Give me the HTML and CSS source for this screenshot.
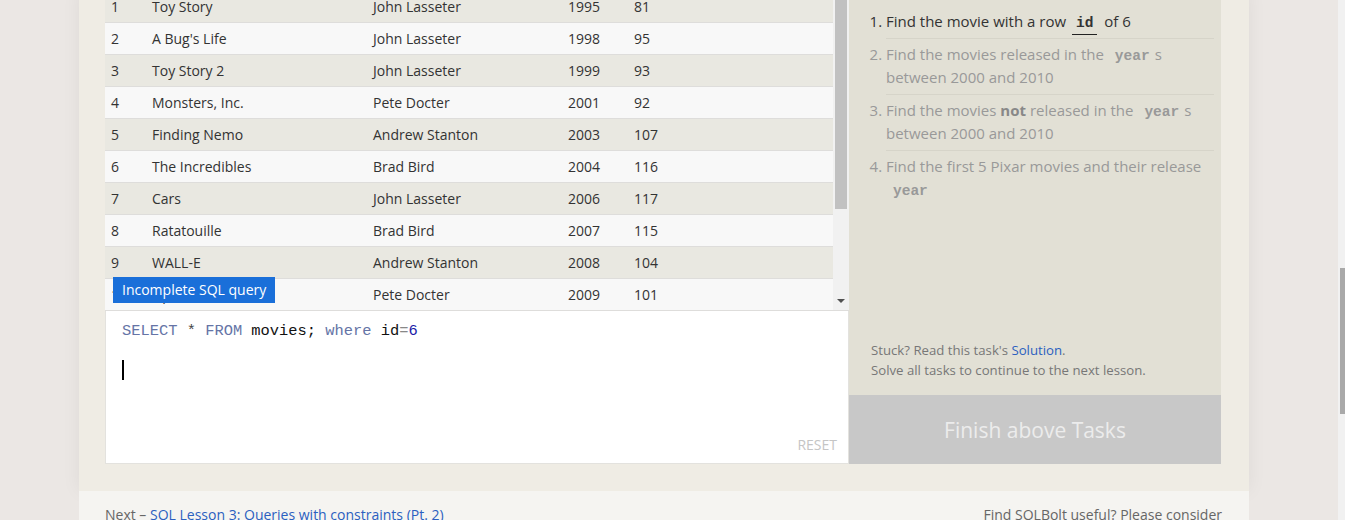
FILE: index.html
```html
<!DOCTYPE html>
<html>
<head>
<meta charset="utf-8">
<link rel="stylesheet" href="styles.css">
</head>
<body>
<div class="page">
  <div class="container">
    <div class="exercise">
      <div class="left">
        <div class="results">
          <div class="grid">
            <div class="row odd"><span>1</span><span>Toy Story</span><span>John Lasseter</span><span>1995</span><span>81</span></div>
            <div class="row"><span>2</span><span>A Bug's Life</span><span>John Lasseter</span><span>1998</span><span>95</span></div>
            <div class="row odd"><span>3</span><span>Toy Story 2</span><span>John Lasseter</span><span>1999</span><span>93</span></div>
            <div class="row"><span>4</span><span>Monsters, Inc.</span><span>Pete Docter</span><span>2001</span><span>92</span></div>
            <div class="row odd"><span>5</span><span>Finding Nemo</span><span>Andrew Stanton</span><span>2003</span><span>107</span></div>
            <div class="row"><span>6</span><span>The Incredibles</span><span>Brad Bird</span><span>2004</span><span>116</span></div>
            <div class="row odd"><span>7</span><span>Cars</span><span>John Lasseter</span><span>2006</span><span>117</span></div>
            <div class="row"><span>8</span><span>Ratatouille</span><span>Brad Bird</span><span>2007</span><span>115</span></div>
            <div class="row odd"><span>9</span><span>WALL-E</span><span>Andrew Stanton</span><span>2008</span><span>104</span></div>
            <div class="row"><span>10</span><span>Up</span><span>Pete Docter</span><span>2009</span><span>101</span></div>
          </div>
          <div class="vscroll">
            <div class="vthumb"></div>
            <div class="varrow"></div>
          </div>
          <div class="tooltip">Incomplete SQL query</div>
        </div>
        <div class="editor">
          <div class="code-line"><span class="kw">SELECT</span> <span class="op">*</span> <span class="kw">FROM</span> movies; <span class="kw">where</span> id<span class="eq">=</span><span class="num">6</span></div>
          <div class="code-line"></div>
          <div class="code-line"><span class="cursor"></span></div>
          <div class="reset">RESET</div>
        </div>
      </div>
      <div class="right">
        <ol class="tasks">
          <li class="active">Find the movie with a row <code class="tcode active-code">id</code> of 6</li>
          <li>Find the movies released in the <code class="tcode">year</code>s between 2000 and 2010</li>
          <li>Find the movies <b>not</b> released in the <code class="tcode">year</code>s between 2000 and 2010</li>
          <li>Find the first 5 Pixar movies and their release <code class="tcode">year</code></li>
        </ol>
        <div class="help">
          <div>Stuck? Read this task's <a class="link">Solution</a>.</div>
          <div>Solve all tasks to continue to the next lesson.</div>
        </div>
        <div class="finish">Finish above Tasks</div>
      </div>
    </div>
  </div>
  <div class="footer">
    <div class="next">Next – <a class="link">SQL Lesson 3: Queries with constraints (Pt. 2)</a></div>
    <div class="useful">Find SQLBolt useful? Please consider</div>
  </div>
</div>
<div class="page-scroll"><div class="page-thumb"></div></div>
</body>
</html>
```
FILE: styles.css
```css
html, body {
  margin: 0;
  padding: 0;
  height: 520px;
  overflow: hidden;
}
body {
  background: #ebe7e4;
  font-family: "Open Sans", "Liberation Sans", sans-serif;
  color: #333;
}
.page {
  width: 1170px;
  margin-left: 79px;
  margin-top: -9px;
}
.container {
  background: #efece4;
  padding: 0 28px 27px 26px;
  box-shadow: 0 0 18px rgba(0, 0, 0, 0.06);
}
.exercise {
  display: flex;
}
.left {
  width: 744px;
  display: flex;
  flex-direction: column;
}
.results {
  position: relative;
  display: flex;
  height: 320px;
}
.grid {
  width: 728px;
}
.row {
  display: grid;
  grid-template-columns: 41px 221px 195px 66px 1fr;
  height: 31px;
  align-items: center;
  border-bottom: 1px solid #dedddb;
  background: #f8f8f8;
  font-size: 14px;
  color: #333;
}
.row.odd {
  background: #e9e8e1;
}
.row span {
  padding-left: 6px;
  white-space: nowrap;
}
.vscroll {
  width: 16px;
  background: #f1f1f1;
  position: relative;
  border-bottom: 1px solid #dedddb;
}
.vthumb {
  margin: 0 2px;
  height: 218px;
  background: #c1c1c1;
}
.varrow {
  position: absolute;
  left: 4px;
  bottom: 7px;
  width: 0;
  height: 0;
  border-left: 4px solid transparent;
  border-right: 4px solid transparent;
  border-top: 4px solid #505050;
}
.tooltip {
  position: absolute;
  left: 8px;
  top: 286px;
  height: 26px;
  line-height: 26px;
  padding: 0 9px;
  background: #1a6fd9;
  color: #fff;
  font-size: 14px;
}
.editor {
  background: #fff;
  border: 1px solid #e3e2de;
  border-top: none;
  padding: 10px 0 0 16px;
  box-sizing: border-box;
  height: 153px;
  display: flex;
  flex-direction: column;
  font-family: "Liberation Mono", "DejaVu Sans Mono", monospace;
  font-size: 15.4px;
}
.code-line {
  height: 20px;
  line-height: 20px;
  color: #111;
  white-space: pre;
}
.kw {
  color: #6574a6;
}
.op {
  color: #444;
}
.eq {
  color: #888;
}
.num {
  color: #1c1ca8;
}
.cursor {
  display: inline-block;
  width: 2px;
  height: 20px;
  background: #000;
  vertical-align: top;
  margin-top: -1px;
}
.reset {
  margin-top: auto;
  align-self: flex-end;
  margin-right: 11px;
  margin-bottom: 9px;
  font-family: "Open Sans", "Liberation Sans", sans-serif;
  font-size: 14px;
  color: #c5c5c5;
  line-height: 18px;
}
.right {
  width: 372px;
  background: #e2e0d5;
  display: flex;
  flex-direction: column;
}
.tasks {
  margin: 0;
  padding: 15px 7px 0 37px;
  font-size: 15px;
  color: #999;
}
.tasks li {
  padding: 4px 0 5px 0;
  line-height: 23px;
  border-bottom: 1px solid #d6d4c9;
}
.tasks li:last-child {
  border-bottom: none;
}
.tasks li.active {
  color: #333;
}
.tcode {
  font-family: "Liberation Mono", "DejaVu Sans Mono", monospace;
  font-weight: bold;
  font-size: 14.5px;
  line-height: 1;
  padding: 0 5px 0 7px;
}
.active-code {
  border-bottom: 1px solid #222;
  padding: 0 4px 3px 4px;
  margin: 0 3px 0 2px;
}
.tasks b {
  color: #888;
}
.help {
  margin-top: auto;
  padding: 0 0 15px 22px;
  font-size: 13.2px;
  line-height: 20px;
  color: #777;
}
.link {
  color: #2b5fc0;
  text-decoration: none;
}
.finish {
  height: 69px;
  background: #c8c8c8;
  color: #ececec;
  font-size: 21px;
  display: flex;
  align-items: center;
  justify-content: center;
}
.footer {
  background: #f5f4f1;
  display: flex;
  justify-content: space-between;
  padding: 14px 27px 0 26px;
  height: 60px;
  font-size: 14px;
  line-height: 20px;
  color: #666;
}
.page-scroll {
  position: fixed;
  top: 0;
  right: 0;
  width: 7px;
  height: 520px;
  background: #f1f1f1;
}
.page-thumb {
  margin: 268px 0 0 2px;
  height: 146px;
  background: #a9a9a9;
}
```
